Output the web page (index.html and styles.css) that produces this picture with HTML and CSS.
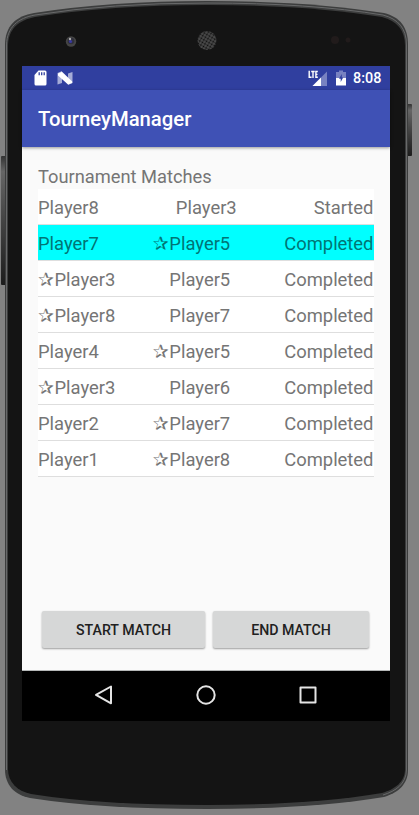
FILE: index.html
```html
<!DOCTYPE html>
<html lang="en">
<head>
<meta charset="utf-8">
<title>TourneyManager</title>
<link rel="stylesheet" href="styles.css">
</head>
<body>
<div class="device">
  <svg class="frame" width="419" height="815" viewBox="0 0 419 815" aria-hidden="true">
    <defs>
      <linearGradient id="key" x1="0" x2="0" y1="0" y2="1">
        <stop offset="0" stop-color="#333"/><stop offset=".12" stop-color="#666"/><stop offset=".5" stop-color="#444"/><stop offset="1" stop-color="#1c1c1c"/>
      </linearGradient>
      <pattern id="mesh" width="3" height="3" patternUnits="userSpaceOnUse" patternTransform="rotate(30)">
        <rect width="3" height="3" fill="#4c4c4c"/><circle cx="1.5" cy="1.5" r="1" fill="#0c0c0c"/>
      </pattern>
    </defs>
    <rect x="1" y="156" width="5" height="129" rx="1" fill="url(#key)"/>
    <rect x="407" y="104" width="5" height="52" rx="1" fill="url(#key)"/>
    <path fill="#3c3d3d" d="M5 45C5 26 16 16 34 13Q110 1 207 1Q310 1 384 13C400 17 408 27 408 45V770C408 785 397 793 384 797Q310 809 207 809Q100 809 30 798C14 795 5 784 5 770Z"/>
    <path fill="none" stroke="#68696a" d="M6.500 770V45C7 27 18 18 35 15Q110 3 207 3Q310 3 383 15C398 19 406.500 28 406.500 45V770C406 784 396 791 383 795"/>
    <path fill="#141414" d="M8 46C8 29 19 20 35 17Q110 5 207 5Q310 5 382 17C397 21 405 30 405 46V769C405 782 395 789 382 793Q310 805 207 805Q100 805 31 794C17 791 8 782 8 769Z"/>
    <circle cx="71" cy="41.500" r="5.200" fill="#454545"/>
    <circle cx="71" cy="41" r="3.300" fill="#30303c"/>
    <circle cx="70.500" cy="41.500" r="1.600" fill="#3939a0"/>
    <circle cx="70" cy="39" r="1.200" fill="#aaa"/>
    <circle cx="207" cy="40.500" r="9.500" fill="url(#mesh)"/>
    <circle cx="335" cy="40" r="4" fill="#211b1b"/>
    <circle cx="348" cy="40" r="2.500" fill="#211b1b"/>
  </svg>

  <main class="screen">
    <div class="status">
      <svg width="13" height="16" viewBox="0 0 13 16"><path fill="#fff" d="M4.500 .5H11Q12.500 .5 12.500 2V14Q12.500 15.500 11 15.500H2Q.5 15.500 .5 14V5Z"/><path stroke="#303f9f" stroke-width="1.300" d="M5.200 2.200V5.200M7.700 2.200V5.200M10.200 2.200V5.200"/></svg>
      <svg class="nougat" width="16" height="14" viewBox="0 0 16 14"><path fill="#a5acd7" d="M.5 2L5 0V12L.5 13.500ZM11 2.500L15.500 1V12L11 14Z"/><path fill="#fff" d="M1 2.500L5 .8L15.200 10.500V12L11 13.600L1 4.500Z"/></svg>
      <svg class="signal" width="20" height="17" viewBox="0 0 20 17"><path fill="#7882c1" d="M19 1.500V16H4.500Z"/><path fill="#fff" d="M13 7.500V16H4.500Z"/><path fill="none" stroke="#fff" stroke-width="1.400" d="M1.200 .8V7.300H3.600M3.200 1.500H6.700M5 1.500V8M9.800 1.500H7.900V7.300H9.800M7.900 4.400H9.500"/></svg>
      <svg class="battery" width="10" height="16" viewBox="0 0 10 16"><path fill="#7882c1" d="M3 .5H7V2H10V9H0V2H3Z"/><path fill="#fff" d="M0 8H10V15.500H0Z"/><path fill="#303f9f" d="M5.800 4L3 8.700H4.700V12L7.200 7.500H5.800Z"/></svg>
      <span class="clock">8:08</span>
    </div>
    <header class="appbar">TourneyManager</header>
    <section class="content">
      <h1>Tournament Matches</h1>
      <ul class="matches">
        <li><span>Player8</span><span>Player3</span><span>Started</span></li>
        <li class="selected"><span>Player7</span><span><i>✰</i>Player5</span><span>Completed</span></li>
        <li><span><i>✰</i>Player3</span><span>Player5</span><span>Completed</span></li>
        <li><span><i>✰</i>Player8</span><span>Player7</span><span>Completed</span></li>
        <li><span>Player4</span><span><i>✰</i>Player5</span><span>Completed</span></li>
        <li><span><i>✰</i>Player3</span><span>Player6</span><span>Completed</span></li>
        <li><span>Player2</span><span><i>✰</i>Player7</span><span>Completed</span></li>
        <li><span>Player1</span><span><i>✰</i>Player8</span><span>Completed</span></li>
      </ul>
      <div class="actions">
        <button class="start">START MATCH</button>
        <button class="end">END MATCH</button>
      </div>
    </section>
    <nav class="navbar">
      <svg width="20" height="20" viewBox="0 0 20 20"><path d="M17 1.500V18.300L2 9.900Z"/></svg>
      <svg width="20" height="20" viewBox="0 0 20 20"><circle cx="10" cy="10" r="8.700"/></svg>
      <svg width="20" height="20" viewBox="0 0 20 20"><path d="M2.500 2.500H17.500V17.500H2.500Z"/></svg>
    </nav>
  </main>
</div>
</body>
</html>
```

FILE: styles.css
```css
* { box-sizing: border-box; }
body {
  margin: 0;
  background: #828282;
  font-family: Roboto, sans-serif;
  overflow: hidden;
}
.device {
  position: relative;
  width: 419px;
  height: 815px;
  padding: 66px 29px 94px 22px;
}
.frame { position: absolute; inset: 0; }
.screen {
  position: relative;
  height: 655px;
  display: flex;
  flex-direction: column;
  background: #fafafa;
}
.status {
  height: 24px;
  flex: none;
  display: flex;
  align-items: center;
  padding: 0 9px 0 12px;
  background: #303f9f;
}
.nougat { margin-left: 10px; }
.signal { margin-left: auto; }
.battery { margin: 0 7px 0 8px; }
.clock {
  width: 28px;
  color: #fff;
  font-size: 14.400px;
  font-weight: 500;
  white-space: nowrap;
}
.appbar {
  height: 57px;
  flex: none;
  padding-left: 16px;
  background: #3f51b5;
  box-shadow: 0 1px 3px rgba(0, 0, 0, .4);
  color: #fff;
  font-size: 20.300px;
  font-weight: 500;
  line-height: 59px;
}
.content {
  flex: 1;
  display: flex;
  flex-direction: column;
  padding: 18px 16px;
  color: #757575;
  border-bottom: 1px solid #b5b8b8;
}
h1 {
  margin: 0;
  height: 24px;
  font-size: 18.300px;
  font-weight: 400;
  line-height: 24px;
}
.matches {
  width: 335.500px;
  margin: 0;
  padding: 0;
  list-style: none;
  background: #fff;
}
.matches li {
  height: 36px;
  display: flex;
  justify-content: space-between;
  border-bottom: 1px solid #dedede;
  font-size: 18.400px;
  line-height: 37px;
}
.matches .selected { background: #0ff; color: #007575; background-clip: padding-box; }
.matches i {
  display: inline-block;
  width: 16.500px;
  font: 19px/20px "DejaVu Sans", sans-serif;
}
.actions {
  display: flex;
  gap: 8px;
  margin-top: auto;
  padding: 0 4px 4px;
}
button {
  height: 37px;
  padding: 0;
  border: 0;
  border-radius: 2px;
  background: #d6d7d7;
  box-shadow: 0 1px 2px rgba(0, 0, 0, .38);
  color: #212121;
  font: 500 14.200px Roboto, sans-serif;
}
.start { width: 163px; }
.end { width: 156px; }
.navbar {
  height: 50px;
  flex: none;
  display: flex;
  justify-content: center;
  align-items: center;
  gap: 82px;
  padding: 0 1px 3px 0;
  background: #000;
}
.navbar svg { fill: none; stroke: #e4e4e4; stroke-width: 2; stroke-linejoin: round; }
```
